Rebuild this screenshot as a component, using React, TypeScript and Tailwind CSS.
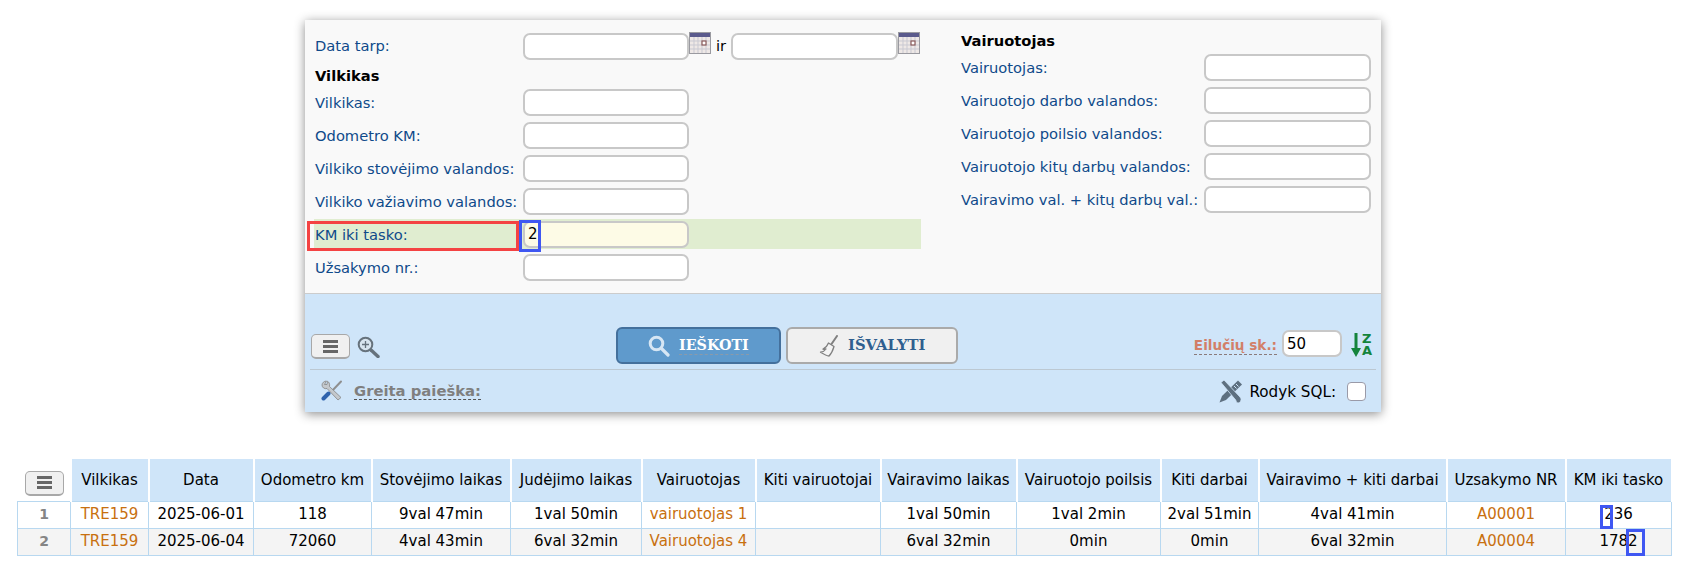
import type {ReactNode} from "react";

const linkColor = "text-[#c8700f]";

const leftRows = ["Vilkikas:", "Odometro KM:", "Vilkiko stovėjimo valandos:", "Vilkiko važiavimo valandos:"];
const rightRows = [
	"Vairuotojas:",
	"Vairuotojo darbo valandos:",
	"Vairuotojo poilsio valandos:",
	"Vairuotojo kitų darbų valandos:",
	"Vairavimo val. + kitų darbų val.:",
];

const columns = [
	{title: "Vilkikas", width: "w-[78px]"},
	{title: "Data", width: "w-[105px]"},
	{title: "Odometro km", width: "w-[118px]"},
	{title: "Stovėjimo laikas", width: "w-[139px]"},
	{title: "Judėjimo laikas", width: "w-[131px]"},
	{title: "Vairuotojas", width: "w-[114px]"},
	{title: "Kiti vairuotojai", width: "w-[125px]"},
	{title: "Vairavimo laikas", width: "w-[136px]"},
	{title: "Vairuotojo poilsis", width: "w-[144px]"},
	{title: "Kiti darbai", width: "w-[98px]"},
	{title: "Vairavimo + kiti darbai", width: "w-[188px]"},
	{title: "Uzsakymo NR", width: "w-[119px]"},
	{title: "KM iki tasko", width: "w-[106px]"},
];

const rows = [
	["TRE159", "2025-06-01", "118", "9val 47min", "1val 50min", "vairuotojas 1", "", "1val 50min", "1val 2min", "2val 51min", "4val 41min", "A00001", "236"],
	["TRE159", "2025-06-04", "72060", "4val 43min", "6val 32min", "Vairuotojas 4", "", "6val 32min", "0min", "0min", "6val 32min", "A00004", "1782"],
];

const linkCols = [0, 5, 11];

function TextBox({value, className = ""}: {value?: string; className?: string}) {
	return (
		<input
			readOnly
			value={value ?? ""}
			className={`h-[27px] border-2 border-[#c8c8c8] rounded-[7px] bg-white px-[3px] text-[15px] text-black outline-none ${className}`}
		/>
	);
}

function MenuButton() {
	return (
		<button className="flex flex-col items-center justify-center gap-[2px] w-[39px] h-[25px] bg-[#f0f0f0] border border-b-2 border-[#a8a8a8] rounded-[5px]">
			<span className="block w-[15px] h-[3px] bg-[#666]" />
			<span className="block w-[15px] h-[3px] bg-[#666]" />
			<span className="block w-[15px] h-[3px] bg-[#666]" />
		</button>
	);
}

function CalendarIcon() {
	return (
		<svg width="22" height="22" viewBox="0 0 22 22" className="shrink-0 -mt-[8px]">
			<rect x="0.5" y="0.5" width="21" height="21" fill="#eee8e6" stroke="#9a9aa0" />
			<rect x="1" y="1" width="20" height="4" fill="#5a5a8c" />
			<path d="M1 9h20M1 13h20M1 17h20M5 5v16M9 5v16M13 5v16M17 5v16" stroke="#c9c9d2" strokeWidth="1" />
			<rect x="13" y="9" width="4" height="4" fill="#fff" stroke="#8a5a5a" strokeWidth="1.2" />
		</svg>
	);
}

function ZoomPlusIcon() {
	return (
		<svg width="23" height="22" viewBox="0 0 23 22">
			<circle cx="8.5" cy="8.5" r="6.8" fill="#d8e4ee" stroke="#66727c" strokeWidth="2" />
			<path d="M8.5 5v7M5 8.5h7" stroke="#66727c" strokeWidth="1.3" />
			<path d="M14 14l7 6.5" stroke="#66727c" strokeWidth="3.4" strokeLinecap="round" />
		</svg>
	);
}

function SearchIcon() {
	return (
		<svg width="22" height="22" viewBox="0 0 22 22">
			<circle cx="8.5" cy="8.5" r="6.3" fill="none" stroke="#d6e6f4" strokeWidth="3" />
			<path d="M13.5 13.5l6.5 6.5" stroke="#d6e6f4" strokeWidth="3.2" strokeLinecap="round" />
		</svg>
	);
}

function BroomIcon() {
	return (
		<svg width="20" height="22" viewBox="0 0 20 22" fill="none">
			<path d="M18 1l-5.5 8" stroke="#808080" strokeWidth="2" strokeLinecap="round" />
			<path d="M9.5 8l5.5 3.5c-1 3.5-2.5 7-5 9.5-2-.2-5.5-2-8.5-3.8 2.5-.2 4.3-1.5 5.5-3.2-1 .2-2 .3-3 .2 2.5-1.300 4.500-3.500 5.500-6.200z" fill="#f4f4f4" stroke="#808080" strokeWidth="1.3" strokeLinejoin="round" />
		</svg>
	);
}

function ToolsIcon() {
	return (
		<svg width="22" height="22" viewBox="0 0 22 22" fill="none">
			<path d="M20 1.5l-9.5 10" stroke="#8f8f8f" strokeWidth="2" strokeLinecap="round" />
			<path d="M7.5 13.5L2.5 18.500" stroke="#2f63ad" strokeWidth="4" strokeLinecap="round" />
			<path d="M5.5 1C3 1 1 3 1 5c0 2.500 2.500 4.300 5 3.500L17 20l3-2.500L8.500 6.500C9 4 8 2 6.500 1.200L6 4.500 3.500 4.500z" fill="#c4c8cc" stroke="#858585" strokeWidth="0.8" strokeLinejoin="round" />
		</svg>
	);
}

function PencilBrushIcon() {
	return (
		<svg width="25" height="25" viewBox="0 0 25 25" fill="none">
			<path d="M20 1.500L24 5.500 8 21 1.500 23.500 4 17z" fill="#5e7080" />
			<path d="M18 5l2.500 2.500M16 7l2.500 2.500" stroke="#cfe5f9" strokeWidth="1" />
			<path d="M3 3.500l3-2.500 16 17c1.500 1.500 1.500 4-.5 5.500-1.500 1-3.500 0-3.500-1.500 0-1-1-2-2-3z" fill="#5e7080" stroke="#cfe5f9" strokeWidth="0.800" />
		</svg>
	);
}

function SortIcon() {
	return (
		<div className="flex items-center gap-[1px] text-[#14843c] font-bold">
			<svg width="10" height="24" viewBox="0 0 10 24">
				<path d="M3.500 0h3v15H10l-5 9-5-9h3.500z" fill="#14843c" />
			</svg>
			<div className="flex flex-col text-[13px] leading-[12px] font-['DejaVu_Sans',sans-serif] w-[10px]">
				<span>Z</span>
				<span>A</span>
			</div>
		</div>
	);
}

function HighlightBox({className}: {className: string}) {
	return <span className={`absolute border-[3px] border-[#3f57f2] ${className}`} />;
}

function FormRow({label, children}: {label: string; children?: ReactNode}) {
	return (
		<div className="flex items-center h-[33px]">
			<span className="text-[#0f4a8a] w-[209px] shrink-0 pl-[1px] pt-[2px]">{label}</span>
			{children ?? <TextBox className="w-[166px]" />}
		</div>
	);
}

function SearchPanel() {
	return (
		<div className="ml-[305px] w-[1076px] h-[392px] flex flex-col shadow-[0_2px_10px_rgba(0,0,0,0.45)]">
			<div className="h-[274px] bg-[#f9f9f9] border-b border-[#cccccc] flex">
				<div className="relative w-[616px] pl-[9px] pt-[10px]">
					<div className="flex items-center h-[33px]">
						<span className="text-[#0f4a8a] w-[209px] shrink-0 pl-[1px]">Data tarp:</span>
						<TextBox className="w-[166px]" />
						<CalendarIcon />
						<span className="ml-[5px] mr-[5px] text-black">ir</span>
						<TextBox className="w-[167px]" />
						<CalendarIcon />
					</div>
					<div className="h-[23px] pl-[1px] pt-[4px] flex items-center font-bold text-black">Vilkikas</div>
					{leftRows.map(label => (
						<FormRow key={label} label={label} />
					))}
					<div className="h-[30px] mt-[1px] mb-[2px] bg-[#e0edd0] flex items-center">
						<span className="text-[#0f4a8a] w-[209px] shrink-0 pl-[1px] pt-[2px]">KM iki tasko:</span>
						<TextBox value="2" className="w-[166px] !bg-[#fdfbe6]" />
					</div>
					<FormRow label="Užsakymo nr.:" />
					<HighlightBox className="left-[2px] top-[201px] w-[212px] h-[30px] !border-[#f44343]" />
					<HighlightBox className="left-[214px] top-[200px] w-[22px] h-[32px]" />
				</div>
				<div className="pl-[40px] pt-[10px]">
					<div className="h-[21px] pt-[2px] flex items-center font-bold text-black">Vairuotojas</div>
					{rightRows.map(label => (
						<div key={label} className="flex items-center h-[33px]">
							<span className="text-[#0f4a8a] w-[243px] shrink-0 pt-[2px]">{label}</span>
							<TextBox className="w-[167px]" />
						</div>
					))}
				</div>
			</div>
			<div className="flex-1 bg-[#cfe5f9] px-[5px] flex flex-col">
				<div className="h-[76px] border-b border-[#bcc8d2] pt-[33px] relative flex">
					<div className="flex items-center gap-[7px] pl-[1px] pt-[2px] h-[37px] w-[306px]">
						<MenuButton />
						<ZoomPlusIcon />
					</div>
					<button className="h-[37px] w-[165px] rounded-[6px] bg-[#5f9acc] border-2 border-[#44709c] flex items-center pl-[30px] gap-[9px] font-['DejaVu_Serif',serif] font-bold text-white text-[14.3px]">
						<SearchIcon />
						<span className="border-b border-dashed border-[#8a9aaa] leading-[17px]">IEŠKOTI</span>
					</button>
					<button className="ml-[5px] h-[37px] w-[172px] rounded-[6px] bg-[#f0f0f0] border-2 border-[#aaaaaa] flex items-center pl-[31px] gap-[9px] font-['DejaVu_Serif',serif] font-bold text-[#2f5f8f] text-[14.8px]">
						<BroomIcon />
						<span>IŠVALYTI</span>
					</button>
					<div className="ml-auto flex items-center h-[37px] pr-[4px] -mt-[2px]">
						<span className="mt-[5px] font-bold text-[#d27f68] text-[13.6px] border-b border-dashed border-[#8a7a7a] leading-[17px]">Eilučių sk.:</span>
						<TextBox value="50" className="ml-[5px] w-[60px]" />
						<div className="ml-[9px] mt-[3px]">
							<SortIcon />
						</div>
					</div>
				</div>
				<div className="flex-1 flex items-center">
					<div className="flex items-center pl-[11px] gap-[11px]">
						<ToolsIcon />
						<span className="font-bold text-[#7f7f7f] text-[14.8px] border-b border-dashed border-[#555] leading-[17px]">Greita paieška:</span>
					</div>
					<div className="ml-auto flex items-center pr-[10px]">
						<PencilBrushIcon />
						<span className="ml-[6px] pt-[2px] text-[15.2px] text-black">Rodyk SQL:</span>
						<span className="ml-[11px] block w-[19px] h-[19px] bg-white border border-[#9a9aa8] rounded-[4px]" />
					</div>
				</div>
			</div>
		</div>
	);
}

function ResultTable() {
	return (
		<table className="ml-[17px] mt-[47px] w-[1654px] table-fixed border-collapse text-black text-center text-[15px]">
			<thead>
				<tr className="h-[42px]">
					<th className="w-[53px] align-bottom pb-[5px] pl-[7px] font-normal">
						<MenuButton />
					</th>
					{columns.map(col => (
						<th key={col.title} className={`${col.width} bg-[#cfe5f9] border-x-2 border-white font-normal whitespace-nowrap`}>
							{col.title}
						</th>
					))}
				</tr>
			</thead>
			<tbody>
				{rows.map((row, i) => (
					<tr key={i} className={`h-[27px] ${i === 1 ? "bg-[#f4f4f4]" : "bg-white"}`}>
						<td className="border border-[#b8d8f0] font-bold text-[14px] text-[#858585]">{i + 1}</td>
						{row.map((cell, j) => (
							<td
								key={j}
								className={`relative border border-[#b8d8f0] whitespace-nowrap ${linkCols.includes(j) ? linkColor : ""}`}
							>
								{cell}
								{j === 12 && i === 0 && <HighlightBox className="left-[34px] top-[3px] w-[13px] h-[24px]" />}
								{j === 12 && i === 1 && <HighlightBox className="left-[60px] top-0 w-[19px] h-[27px]" />}
							</td>
						))}
					</tr>
				))}
			</tbody>
		</table>
	);
}

export default function App() {
	return (
		<div className="h-[569px] overflow-hidden bg-white pt-[20px] text-[14.7px] font-['DejaVu_Sans',sans-serif]">
			<SearchPanel />
			<ResultTable />
		</div>
	);
}
